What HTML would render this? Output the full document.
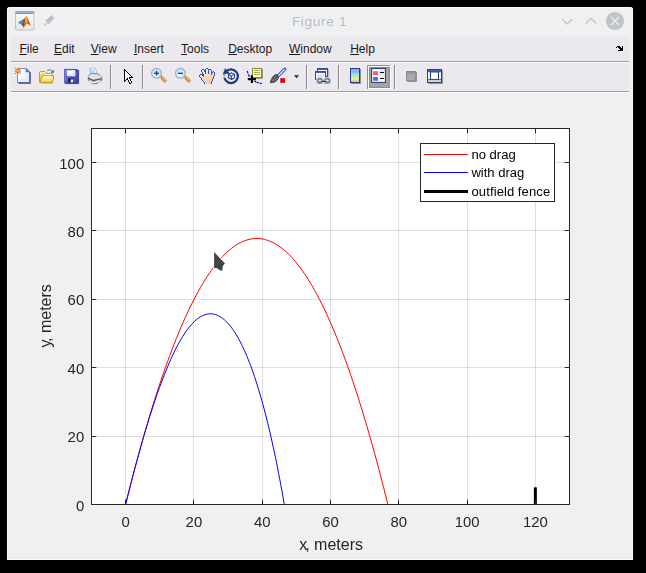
<!DOCTYPE html>
<html><head><meta charset="utf-8"><title>Figure 1</title>
<style>
html,body{margin:0;padding:0;background:#000;}
body{width:646px;height:573px;overflow:hidden;position:relative;font-family:"Liberation Sans",sans-serif;}
#win{position:absolute;left:7px;top:7px;width:626px;height:553px;background:#eff0f1;border-radius:3px 3px 1px 1px;box-shadow:inset 0 0 0 1px #fbfbfc;}
#menubar{position:absolute;left:11px;top:36px;width:618px;height:25px;background:#ebe9ee;}
#toolbar{position:absolute;left:11px;top:63px;width:618px;height:28px;background:#ebe9ee;}
.sepg{position:absolute;left:11px;width:618px;height:1px;background:#a0a0a3;}
.sepw{position:absolute;left:11px;width:618px;height:1px;background:#ffffff;}
#canvas{position:absolute;left:11px;top:93px;width:618px;height:463px;background:#f0f0f0;}
.mi{position:absolute;top:42px;font-size:12px;line-height:14px;color:#1a1a1a;white-space:pre;}
.mi u{text-decoration:underline;text-underline-offset:1px;}
#title{position:absolute;left:291.9px;top:13px;font-size:13.6px;letter-spacing:0.68px;line-height:18px;color:#bbbfc3;white-space:pre;}
svg{position:absolute;left:0;top:0;will-change:transform;}
text{font-family:"Liberation Sans",sans-serif;}
</style></head><body>
<div id="win"></div>
<div id="title">Figure 1</div>
<div id="menubar"></div>
<div class="sepg" style="top:61px"></div><div class="sepw" style="top:62px"></div>
<div id="toolbar"></div>
<div class="sepg" style="top:91px"></div><div class="sepw" style="top:92px"></div>
<div id="canvas"></div>
<div class="mi" style="left:19.4px"><u>F</u>ile</div>
<div class="mi" style="left:54.0px"><u>E</u>dit</div>
<div class="mi" style="left:90.8px"><u>V</u>iew</div>
<div class="mi" style="left:133.9px"><u>I</u>nsert</div>
<div class="mi" style="left:181.1px"><u>T</u>ools</div>
<div class="mi" style="left:228.2px"><u>D</u>esktop</div>
<div class="mi" style="left:289.0px"><u>W</u>indow</div>
<div class="mi" style="left:350.2px"><u>H</u>elp</div>
<svg width="646" height="573" viewBox="0 0 646 573">
<defs>
<linearGradient id="gpage" x1="0" y1="0" x2="1" y2="1"><stop offset="0" stop-color="#ffffff"/><stop offset="0.35" stop-color="#fcfdff"/><stop offset="1" stop-color="#d2e3fa"/></linearGradient>
<linearGradient id="gfold" x1="0" y1="0" x2="0" y2="1"><stop offset="0" stop-color="#fff8c4"/><stop offset="1" stop-color="#f6cc50"/></linearGradient>
<linearGradient id="gsave" x1="0" y1="0" x2="1" y2="1"><stop offset="0" stop-color="#7a7ae8"/><stop offset="1" stop-color="#3a3aa8"/></linearGradient>
<linearGradient id="gcb" x1="0" y1="0" x2="0" y2="1"><stop offset="0.05" stop-color="#a8a0f8"/><stop offset="0.27" stop-color="#88b8f0"/><stop offset="0.42" stop-color="#90e8f0"/><stop offset="0.57" stop-color="#c0e8b0"/><stop offset="0.74" stop-color="#f8f088"/><stop offset="0.87" stop-color="#f0c890"/><stop offset="1" stop-color="#ffb898"/></linearGradient>
<linearGradient id="ghand" gradientUnits="userSpaceOnUse" x1="201" y1="70" x2="212" y2="84"><stop offset="0" stop-color="#fdeedc"/><stop offset="1" stop-color="#f2c69c"/></linearGradient>
<radialGradient id="glens" cx="0.4" cy="0.75" r="0.8"><stop offset="0" stop-color="#ffffff"/><stop offset="0.55" stop-color="#c4e8f0"/><stop offset="1" stop-color="#dce6f8"/></radialGradient>
<linearGradient id="gmlb" x1="0" y1="0" x2="0" y2="1"><stop offset="0" stop-color="#ffffff"/><stop offset="1" stop-color="#e4e4e6"/></linearGradient>
<linearGradient id="gmlo" x1="0" y1="0" x2="1" y2="0"><stop offset="0" stop-color="#a02810"/><stop offset="0.3" stop-color="#e86a18"/><stop offset="0.5" stop-color="#f49a20"/><stop offset="0.72" stop-color="#d04c1a"/><stop offset="1" stop-color="#8c2418"/></linearGradient>
<linearGradient id="gmlp" x1="0" y1="0" x2="1" y2="0"><stop offset="0" stop-color="#3c4488"/><stop offset="1" stop-color="#8a2216"/></linearGradient>
<linearGradient id="gprn" x1="0" y1="0" x2="0" y2="1"><stop offset="0" stop-color="#e8e8e8"/><stop offset="1" stop-color="#9a9a9a"/></linearGradient>
<linearGradient id="gmlt" x1="0" y1="0" x2="0" y2="1"><stop offset="0" stop-color="#78a4ce"/><stop offset="0.45" stop-color="#94bcde"/><stop offset="1" stop-color="#588cc4"/></linearGradient>
<linearGradient id="gmlw" x1="0" y1="0" x2="1" y2="0"><stop offset="0" stop-color="#5aa8e2"/><stop offset="0.6" stop-color="#4484c8"/><stop offset="1" stop-color="#3e5aa4"/></linearGradient>
</defs>
<g id="mlicon">
<rect x="15.5" y="11.5" width="18.5" height="18.6" rx="1.2" fill="url(#gmlb)" stroke="#c4c5c8" stroke-width="1"/>
<path d="M16 30.4 L33.5 30.4" stroke="#d4d5d8" stroke-width="0.8"/>
<rect x="15.3" y="11" width="18.9" height="3" rx="0.8" fill="url(#gmlt)"/>
<path d="M17.7 22.5 Q21 20.7 24.7 18.5 L23.9 21.4 L22.7 23.8 L21.6 24.7 Q19.6 23.9 17.7 22.5 Z" fill="url(#gmlw)"/>
<path d="M24.7 18.5 L25.7 16.8 L25.2 21 L24 24.6 L22.6 25.8 L21.6 24.7 L22.7 23.8 L23.9 21.4 Z" fill="url(#gmlp)"/>
<path d="M26.3 15.7 C27.3 15.5 28.3 20.5 30.8 25.5 C29.3 24.7 28 23.3 26.7 24.2 C25.5 25.1 24.7 27 23.6 27.7 C23.2 27 22.9 26.4 22.6 25.8 C24 24 25 19 26.3 15.7 Z" fill="url(#gmlo)"/>
<path d="M26.4 16.8 L25.9 22.4" stroke="#f8c638" stroke-width="1.1" opacity="0.85"/>
<path d="M23.6 27.7 C24.2 26 25 25 26 24.5 L24.9 26.7 Z" fill="#f8c020"/>
</g>
<g id="pin" stroke="#bcc0c4" fill="none" stroke-linecap="butt">
<path d="M47.6 21.9 L52.9 16.6" stroke-width="4.2"/>
<path d="M45.5 19.6 L50.2 24.3" stroke-width="1.2"/>
<path d="M47.8 22.0 L44.2 25.7" stroke-width="1.1"/>
</g>
<g fill="none" stroke="#b9bdc1" stroke-width="1.1">
<path d="M561.8 18.8 L567.1 24.0 L572.4 18.8"/>
<path d="M585.8 23.6 L591.1 18.3 L596.4 23.6"/>
</g>
<circle cx="615" cy="21" r="9.1" fill="#bfc4c8"/>
<path d="M611 17 L619 25 M619 17 L611 25" stroke="#f0f1f2" stroke-width="1.1" fill="none"/>
<g id="dock">
<path d="M617 46h3v1h-3zM622 46h1v1h-1zM616 47h1v1h-1zM618 47h3v1h-3zM622 47h1v1h-1zM619 48h4v1h-4zM620 49h3v1h-3zM618 50h5v1h-5z" fill="#000000"/>
</g>
<line x1="110.5" y1="65" x2="110.5" y2="89" stroke="#86868a" stroke-width="1"/>
<line x1="111.5" y1="65" x2="111.5" y2="89" stroke="#f8f8fa" stroke-width="1"/>
<line x1="142.5" y1="65" x2="142.5" y2="89" stroke="#86868a" stroke-width="1"/>
<line x1="143.5" y1="65" x2="143.5" y2="89" stroke="#f8f8fa" stroke-width="1"/>
<line x1="306.5" y1="65" x2="306.5" y2="89" stroke="#86868a" stroke-width="1"/>
<line x1="307.5" y1="65" x2="307.5" y2="89" stroke="#f8f8fa" stroke-width="1"/>
<line x1="338.5" y1="65" x2="338.5" y2="89" stroke="#86868a" stroke-width="1"/>
<line x1="339.5" y1="65" x2="339.5" y2="89" stroke="#f8f8fa" stroke-width="1"/>
<line x1="394.5" y1="65" x2="394.5" y2="89" stroke="#86868a" stroke-width="1"/>
<line x1="395.5" y1="65" x2="395.5" y2="89" stroke="#f8f8fa" stroke-width="1"/>
<g id="new">
<path d="M18.5 83.5 L30.5 83.5 L30.5 72.2" stroke="#5e6c86" stroke-width="1" fill="none"/>
<path d="M17.5 68.5 L26 68.5 L29.5 72 L29.5 82.5 L17.5 82.5 Z" fill="url(#gpage)" stroke="#6c92dc" stroke-width="1"/>
<path d="M29.5 72 L29.5 82.5 L17.8 82.5" stroke="#6668a8" stroke-width="1" fill="none"/>
<path d="M26 68.3 L26 72 L29.7 72 Z" fill="#5e64a8" stroke="#5e64a8" stroke-width="0.5"/>
<circle cx="27.3" cy="70.6" r="0.6" fill="#6c9ce0"/>
<g fill="#e8703c"><circle cx="15.4" cy="68.5" r="0.65"/><circle cx="20.4" cy="68.5" r="0.65"/><circle cx="15.4" cy="73.4" r="0.65"/><circle cx="20.4" cy="73.4" r="0.65"/></g>
<path d="M17.9 67.6 L17.9 74.2 M14.6 70.9 L21.2 70.9" stroke="#f4b088" stroke-width="1.2" fill="none"/>
<circle cx="17.9" cy="70.9" r="2" fill="#f0a050" stroke="#e4682e" stroke-width="1"/>
<rect x="17.2" y="70.2" width="1.4" height="1.4" fill="#e4e45c"/>
</g>
<g id="open">
<path d="M47.3 70.8 Q49.7 68.2 52.3 71" stroke="#5a7aaa" stroke-width="1" fill="none"/>
<path d="M53.7 69.8 L53.9 72.9 L50.8 72.4 Z" fill="#3e5e9a"/>
<path d="M40.6 83.4 L53.4 83.4" stroke="#8a9ab0" stroke-width="0.8" opacity="0.55"/>
<path d="M39.5 73.2 Q39.5 71.5 41.2 71.5 L44.6 71.5 L46 73.4 L51.4 73.4 Q52.4 73.4 52.4 74.6 L52.4 82.3 L39.5 82.3 Z" fill="#f4d050" stroke="#c8981a" stroke-width="1"/>
<path d="M40.6 74.6 L40.6 72.8 L44.4 72.8 L45.6 74.6 L51 74.6" stroke="#fffbe4" stroke-width="1.1" fill="none"/>
<path d="M42.6 75.9 L53.6 75.9 L53.4 79 L52.2 82.4 L39.9 82.4 L41.4 78 Z" fill="url(#gfold)" stroke="#c8981a" stroke-width="1" stroke-linejoin="round"/>
<path d="M43.2 77 L51.6 77" stroke="#fffdf0" stroke-width="1" fill="none"/>
</g>
<g id="save">
<path d="M65.4 83.6 L78.6 83.6 L78.6 70.2" stroke="#2c3a78" stroke-width="1" fill="none" opacity="0.85"/>
<path d="M64.5 69.4 L77.1 69.4 L78 70.3 L78 83 L64.5 83 Z" fill="url(#gsave)" stroke="#3a3aa4" stroke-width="0.8"/>
<path d="M65.2 70 L65.2 82.4" stroke="#8c8cec" stroke-width="0.9"/>
<rect x="66.9" y="70.2" width="8.3" height="5.7" fill="#f6f8fc"/>
<path d="M66.9 75.9 L75.2 75.9 L75.2 72 Z" fill="#dfe4f0"/>
<path d="M66.9 76.5 L75.2 76.5" stroke="#8484dc" stroke-width="0.8"/>
<rect x="76.4" y="70" width="0.9" height="1.4" fill="#20205c"/>
<rect x="68.2" y="78.4" width="5.4" height="3.8" fill="#1a1a34"/>
<rect x="70.7" y="79.4" width="2.6" height="2.8" fill="#eeeef6"/>
</g>
<g id="print">
<path d="M89.5 68.2 L95.4 68.2 L97.3 73.8 L90.7 74 Z" fill="#b8d8f8" stroke="#90b0d8" stroke-width="0.6"/>
<path d="M91 69.3 L94.6 69.3 L95.8 72.8" stroke="#eef5fd" stroke-width="1.1" fill="none"/>
<path d="M88.3 75.8 L90.6 73.8 L97.4 73.8 L101.7 76.6 L101.7 80.2 L96.8 83.4 L93 83.4 L88.3 80 Z" fill="url(#gprn)" stroke="#6c6c6c" stroke-width="0.9" stroke-linejoin="round"/>
<path d="M88.6 75.8 L93 78.2 L101.5 76.6 L97.4 74.2 L90.8 74.2 Z" fill="#dcdcdc"/>
<path d="M88.4 76 L93 78.5 L101.6 76.8" stroke="#fafafa" stroke-width="0.9" fill="none"/>
<path d="M88.4 78.1 L93 80.6 L101.6 78.8" stroke="#5a5a5a" stroke-width="1.1" fill="none"/>
<path d="M89.8 80.8 L93.4 82.8 L100 80.8" stroke="#fcfcfc" stroke-width="1.3" fill="none"/>
<path d="M91 83 L93.2 84 L97.4 83.6" stroke="#8a8a8a" stroke-width="0.7" fill="none" opacity="0.7"/>
<circle cx="99.7" cy="78" r="0.6" fill="#48c048"/>
</g>
<g id="pointer">
<path d="M125 71h1v1h-1zM125 72h2v1h-2zM125 73h3v1h-3zM125 74h4v1h-4zM125 75h5v1h-5zM125 76h6v1h-6zM125 77h4v1h-4zM125 78h2v1h-2zM128 78h1v1h-1zM125 79h1v1h-1zM128 79h2v1h-2zM129 80h1v1h-1zM129 81h2v1h-2zM130 82h1v1h-1z" fill="#ffffff"/>
<path d="M124 69h1v1h-1zM124 70h2v1h-2zM124 71h1v1h-1zM126 71h1v1h-1zM124 72h1v1h-1zM127 72h1v1h-1zM124 73h1v1h-1zM128 73h1v1h-1zM124 74h1v1h-1zM129 74h1v1h-1zM124 75h1v1h-1zM130 75h1v1h-1zM124 76h1v1h-1zM131 76h1v1h-1zM124 77h1v1h-1zM129 77h4v1h-4zM124 78h1v1h-1zM127 78h1v1h-1zM129 78h1v1h-1zM124 79h1v1h-1zM126 79h2v1h-2zM130 79h1v1h-1zM124 80h2v1h-2zM128 80h1v1h-1zM130 80h1v1h-1zM124 81h1v1h-1zM128 81h1v1h-1zM131 81h1v1h-1zM129 82h1v1h-1zM131 82h1v1h-1zM129 83h2v1h-2z" fill="#000000"/>
</g>
<g><path d="M160.2 75.8 L161.6 77.2" stroke="#8a8c98" stroke-width="1.8"/><path d="M161.5 77.3 L165.5 81.3" stroke="#d08a20" stroke-width="3.4" stroke-linecap="butt"/><path d="M162.0 76.9 L166.0 80.9" stroke="#f6b450" stroke-width="1.5" stroke-linecap="butt"/><path d="M166.8 80.2 L164.5 82.6" stroke="#8a6a40" stroke-width="1" opacity="0.8"/><circle cx="156.5" cy="73.3" r="4.9" fill="url(#glens)" stroke="#98a8de" stroke-width="1.2"/><path d="M154.0 73.3 L159.0 73.3" stroke="#243c7c" stroke-width="1.3"/><path d="M156.5 70.8 L156.5 75.8" stroke="#243c7c" stroke-width="1.3"/></g>
<g><path d="M184.1 75.8 L185.5 77.2" stroke="#8a8c98" stroke-width="1.8"/><path d="M185.4 77.3 L189.4 81.3" stroke="#d08a20" stroke-width="3.4" stroke-linecap="butt"/><path d="M185.9 76.9 L189.9 80.9" stroke="#f6b450" stroke-width="1.5" stroke-linecap="butt"/><path d="M190.7 80.2 L188.4 82.6" stroke="#8a6a40" stroke-width="1" opacity="0.8"/><circle cx="180.4" cy="73.3" r="4.9" fill="url(#glens)" stroke="#98a8de" stroke-width="1.2"/><path d="M177.9 73.3 L182.9 73.3" stroke="#243c7c" stroke-width="1.3"/></g>
<g id="hand">
<path d="M206 69h2v1h-2zM202 70h2v1h-2zM206 70h2v1h-2zM209 70h2v1h-2zM202 71h2v1h-2zM206 71h2v1h-2zM209 71h2v1h-2zM203 72h2v1h-2zM206 72h2v1h-2zM209 72h2v1h-2zM213 72h1v1h-1zM203 73h2v1h-2zM206 73h2v1h-2zM209 73h2v1h-2zM212 73h2v1h-2zM204 74h7v1h-7zM212 74h2v1h-2zM200 75h2v1h-2zM204 75h10v1h-10zM200 76h3v1h-3zM204 76h9v1h-9zM201 77h12v1h-12zM202 78h11v1h-11zM202 79h10v1h-10zM203 80h9v1h-9zM204 81h7v1h-7zM205 82h6v1h-6zM205 83h6v1h-6z" fill="url(#ghand)"/>
<path d="M206 68h2v1h-2zM202 69h2v1h-2zM205 69h1v1h-1zM208 69h3v1h-3zM201 70h1v1h-1zM204 70h2v1h-2zM208 70h1v1h-1zM211 70h1v1h-1zM201 71h1v1h-1zM204 71h2v1h-2zM208 71h1v1h-1zM211 71h1v1h-1zM213 71h1v1h-1zM202 72h1v1h-1zM205 72h1v1h-1zM208 72h1v1h-1zM211 72h2v1h-2zM214 72h1v1h-1zM202 73h1v1h-1zM205 73h1v1h-1zM208 73h1v1h-1zM211 73h1v1h-1zM214 73h1v1h-1zM200 74h4v1h-4zM211 74h1v1h-1zM214 74h1v1h-1zM199 75h1v1h-1zM202 75h2v1h-2zM214 75h1v1h-1zM199 76h1v1h-1zM203 76h1v1h-1zM213 76h1v1h-1zM200 77h1v1h-1zM213 77h1v1h-1zM201 78h1v1h-1zM213 78h1v1h-1zM201 79h1v1h-1zM212 79h1v1h-1zM202 80h1v1h-1zM212 80h1v1h-1zM203 81h1v1h-1zM211 81h1v1h-1zM204 82h1v1h-1zM211 82h1v1h-1zM204 83h1v1h-1zM211 83h1v1h-1z" fill="#2a50bc"/>
</g>
<g id="rot">
<path d="M225.96 71.57 A6.85 6.85 0 1 1 224.40 77.81" stroke="#1f3c80" stroke-width="2.3" fill="none"/>
<path d="M224.40 77.81 A6.85 6.85 0 0 1 224.54 74.03" stroke="#a8b2cc" stroke-width="1.8" fill="none"/>
<path d="M225.2 68.5 L223.1 74.3 L228.8 73 Z" fill="#1f3c80" stroke="#1f3c80" stroke-width="0.5" stroke-linejoin="round"/>
<path d="M228.2 71.8 L229.2 74.4" stroke="#1f3c80" stroke-width="1"/>
<path d="M228.4 74.4 L231.4 73 L234.5 74.4 L234.5 78 L231.4 79.4 L228.4 78 Z" fill="#f4f7fd" stroke="#22408a" stroke-width="1" stroke-linejoin="round"/>
<path d="M228.4 74.4 L231.4 75.9 L231.4 79.4 L228.4 78 Z" fill="#b4c6f0"/>
<path d="M228.4 74.4 L231.4 75.9 L234.5 74.4 M231.4 75.9 L231.4 79.4" stroke="#22408a" stroke-width="1" fill="none"/>
<path d="M228.4 74.4 L231.4 73 L234.5 74.4 L234.5 78 L231.4 79.4 L228.4 78 Z" fill="none" stroke="#22408a" stroke-width="1" stroke-linejoin="round"/>
</g>
<g id="dcur">
<path d="M253 78.5 L262.5 78.5 L262.5 69" stroke="#8c8c48" stroke-width="1" fill="none" opacity="0.85"/>
<rect x="252.5" y="68.5" width="9" height="9" fill="#ffffc8" stroke="#8a8a30" stroke-width="1"/>
<path d="M254 70.5 L260 70.5 M254 72.5 L260 72.5 M254 74.5 L260 74.5" stroke="#a8a85c" stroke-width="1"/>
<path d="M247.2 71 L247.9 73.3 M248.2 74.3 L249.6 76.7" stroke="#1212f0" stroke-width="1.3" fill="none"/>
<path d="M254.2 81 L256.1 81.8 M256.6 82.2 L259 83 M259.8 83.3 L261.9 83.4" stroke="#1212f0" stroke-width="1.3" fill="none"/>
<path d="M247.8 79.1 L256 79.1 M251.9 75.3 L251.9 83.1" stroke="#000" stroke-width="2.1"/>
</g>
<g id="brush">
<path d="M277.8 76.2 L284.8 69.2" stroke="#3454c0" stroke-width="3.3" stroke-linecap="round"/>
<path d="M278.8 75.2 L284.6 69.4" stroke="#eef2fc" stroke-width="1.3" stroke-linecap="round"/>
<path d="M275.6 74.6 L278.6 77.6" stroke="#d8dce8" stroke-width="1.6"/>
<path d="M276.3 74.1 L279.2 77" stroke="#24347c" stroke-width="1"/>
<path d="M275.8 74.6 C272.8 75.6 271.2 79 270.2 82.8 C274 82.8 277.2 81.4 278.6 77.4 Z" fill="#4c4c4c" stroke="#303030" stroke-width="0.7"/>
<path d="M272.2 81 C273.2 78.8 274.6 77.2 276.4 76.4 M273.8 81.4 C275 79.8 276.2 78.6 277.4 78" stroke="#a4a4a4" stroke-width="0.8" fill="none"/>
<rect x="279.2" y="77.2" width="6.8" height="6.6" fill="#ffffff"/>
<rect x="280.2" y="78.1" width="5" height="4.8" fill="#f00010"/>
<path d="M293.8 75.2 L299.2 75.2 L296.5 78.2 Z" fill="#303030"/>
</g>
<g id="link">
<path d="M328.6 69.4 L328.6 76.6" stroke="#8a8e98" stroke-width="0.9" opacity="0.7"/>
<rect x="317.5" y="68.5" width="10" height="7.8" fill="#fbfcfe" stroke="#26449a" stroke-width="1"/>
<rect x="317" y="68" width="11" height="1.9" fill="#2e4e9e"/>
<rect x="315.5" y="71.5" width="10" height="8" fill="#fbfcfe" stroke="#26449a" stroke-width="1"/>
<rect x="315" y="71" width="11" height="1.9" fill="#2e4e9e"/>
<rect x="317" y="74.2" width="7" height="3" fill="#dde4f2"/>
<ellipse cx="319.9" cy="80.5" rx="3.2" ry="2.7" fill="#dfe3ea" stroke="#c4cee0" stroke-width="1.5"/>
<ellipse cx="327.3" cy="80.5" rx="3.2" ry="2.7" fill="#dfe3ea" stroke="#c4cee0" stroke-width="1.5"/>
<ellipse cx="319.9" cy="80.5" rx="2.3" ry="1.7" fill="none" stroke="#26365e" stroke-width="1"/>
<ellipse cx="327.3" cy="80.5" rx="2.3" ry="1.7" fill="none" stroke="#26365e" stroke-width="1"/>
<path d="M316.6 82.6 Q319.9 84.4 323 82.8 M324.2 82.8 Q327.3 84.4 330.6 82.6" stroke="#6c7890" stroke-width="0.8" fill="none"/>
<path d="M321.6 80.2 L325.8 80.2" stroke="#c0cce8" stroke-width="1.1"/>
<path d="M321.6 81.3 L325.8 81.3" stroke="#1c2c5c" stroke-width="1.2"/>
</g>
<g id="cbar">
<path d="M351 83.5 L360.5 83.5 L360.5 69" stroke="#646c74" stroke-width="1" fill="none" opacity="0.75"/>
<rect x="350.5" y="68.5" width="9" height="14" fill="url(#gcb)" stroke="#24408a" stroke-width="1"/>
</g>
<g id="legbtn">
<rect x="369" y="67" width="21" height="21" fill="#a4a4a5"/>
<rect x="369.5" y="67.5" width="20" height="20" fill="none" stroke="#8c8c8e" stroke-width="1"/>
<path d="M368.5 88.5 L368.5 66.5 L390.5 66.5 L390.5 88.5 Z" stroke="#fbfbfc" stroke-width="1" fill="none"/>
<path d="M367.5 89 L367.5 65.5 L390 65.5" stroke="#8e8e90" stroke-width="1" fill="none"/>
<rect x="371.6" y="68.5" width="13.8" height="13.9" fill="#fbfcfe" stroke="#2a4282" stroke-width="1.1"/>
<rect x="379" y="70" width="5.4" height="5.6" fill="#e4ebf6"/>
<rect x="373.1" y="71.2" width="4.9" height="3.8" fill="#e4646a"/>
<rect x="373.1" y="77" width="4.9" height="3.8" fill="#6264e2"/>
<path d="M380 72.5 L384 72.5 M380 78.5 L384 78.5" stroke="#000" stroke-width="1.1"/>
</g>
<g id="hpt">
<path d="M407 81.5 L416.5 81.5 L416.5 72" stroke="#949494" stroke-width="1" fill="none"/>
<rect x="406" y="71" width="10" height="10" fill="#8e8e8e"/>
<rect x="407" y="73.6" width="8" height="6.4" fill="#a9a9a9"/>
<rect x="407" y="72" width="8" height="1" fill="#949494"/>
</g>
<g id="spt">
<path d="M428.6 83.6 L442.6 83.6 L442.6 70.4" stroke="#6a7068" stroke-width="1" fill="none" opacity="0.7"/>
<rect x="427.5" y="69.5" width="14" height="13" fill="#fafaf8" stroke="#22408a" stroke-width="1"/>
<rect x="428" y="70" width="13" height="1.3" fill="#4464c4"/>
<path d="M428 71.7 L441 71.7" stroke="#22408a" stroke-width="0.9"/>
<rect x="428" y="80" width="13" height="2" fill="#dfd8bc"/>
<path d="M428 79.5 L441 79.5" stroke="#4060b0" stroke-width="0.9"/>
<path d="M429.5 72.6 L429.5 79 M439.9 72.6 L439.9 79" stroke="#d4d8dc" stroke-width="0.9" stroke-dasharray="1 1"/>
<path d="M428.2 80.2 L441 80.2" stroke="#b8b49c" stroke-width="0.6" stroke-dasharray="1 0.8"/>
<rect x="430.5" y="72" width="8" height="7.4" fill="#ffffff" stroke="#22408a" stroke-width="1"/>
</g>
<rect x="91.5" y="128.5" width="478.0" height="376.0" fill="#ffffff"/>
<path d="M125.5 128.5 L125.5 504.5M193.5 128.5 L193.5 504.5M262.5 128.5 L262.5 504.5M330.5 128.5 L330.5 504.5M398.5 128.5 L398.5 504.5M467.5 128.5 L467.5 504.5M535.5 128.5 L535.5 504.5" stroke="#262626" stroke-opacity="0.15" stroke-width="1" fill="none"/>
<path d="M91.5 436.5 L569.5 436.5M91.5 367.5 L569.5 367.5M91.5 299.5 L569.5 299.5M91.5 230.5 L569.5 230.5M91.5 162.5 L569.5 162.5" stroke="#262626" stroke-opacity="0.15" stroke-width="1" fill="none"/>
<path d="M125.64 504.40L127.84 495.54L130.05 486.82L132.25 478.26L134.45 469.85L136.66 461.59L138.86 453.47L141.06 445.51L143.27 437.70L145.47 430.04L147.68 422.53L149.88 415.17L152.08 407.95L154.29 400.89L156.49 393.98L158.69 387.22L160.90 380.61L163.10 374.15L165.30 367.84L167.51 361.68L169.71 355.68L171.91 349.82L174.12 344.11L176.32 338.55L178.52 333.14L180.73 327.88L182.93 322.78L185.13 317.82L187.34 313.01L189.54 308.35L191.75 303.85L193.95 299.49L196.15 295.28L198.36 291.23L200.56 287.32L202.76 283.57L204.97 279.96L207.17 276.51L209.37 273.20L211.58 270.05L213.78 267.04L215.98 264.19L218.19 261.48L220.39 258.93L222.59 256.53L224.80 254.27L227.00 252.17L229.21 250.22L231.41 248.41L233.61 246.76L235.82 245.26L238.02 243.91L240.22 242.70L242.43 241.65L244.63 240.75L246.83 240.00L249.04 239.40L251.24 238.95L253.44 238.65L255.65 238.50L257.85 238.50L260.05 238.65L262.26 238.95L264.46 239.40L266.66 240.00L268.87 240.75L271.07 241.65L273.28 242.70L275.48 243.91L277.68 245.26L279.89 246.76L282.09 248.41L284.29 250.22L286.50 252.17L288.70 254.27L290.90 256.53L293.11 258.93L295.31 261.48L297.51 264.19L299.72 267.04L301.92 270.05L304.12 273.20L306.33 276.51L308.53 279.96L310.74 283.57L312.94 287.32L315.14 291.23L317.35 295.28L319.55 299.49L321.75 303.85L323.96 308.35L326.16 313.01L328.36 317.82L330.57 322.78L332.77 327.88L334.97 333.14L337.18 338.55L339.38 344.11L341.58 349.82L343.79 355.68L345.99 361.68L348.19 367.84L350.40 374.15L352.60 380.61L354.81 387.22L357.01 393.98L359.21 400.89L361.42 407.95L363.62 415.17L365.82 422.53L368.03 430.04L370.23 437.70L372.43 445.51L374.64 453.47L376.84 461.59L379.04 469.85L381.25 478.26L383.45 486.82L385.65 495.54L387.86 504.40" stroke="#ff0000" stroke-width="1" fill="none" stroke-linejoin="round"/>
<path d="M125.64 504.40L127.60 496.51L129.54 488.84L131.45 481.38L133.34 474.13L135.20 467.08L137.05 460.23L138.88 453.57L140.69 447.11L142.47 440.83L144.24 434.74L146.00 428.83L147.73 423.09L149.46 417.52L151.16 412.13L152.85 406.90L154.53 401.84L156.19 396.93L157.84 392.19L159.48 387.61L161.10 383.18L162.71 378.90L164.31 374.77L165.91 370.79L167.49 366.95L169.05 363.27L170.62 359.72L172.17 356.32L173.71 353.05L175.24 349.93L176.77 346.94L178.28 344.08L179.79 341.36L181.30 338.78L182.79 336.33L184.28 334.01L185.77 331.81L187.24 329.75L188.71 327.82L190.18 326.01L191.64 324.33L193.10 322.78L194.55 321.35L195.99 320.05L197.43 318.87L198.87 317.82L200.31 316.89L201.74 316.08L203.16 315.40L204.59 314.84L206.01 314.39L207.42 314.08L208.84 313.88L210.25 313.80L211.65 313.85L213.06 314.01L214.46 314.29L215.86 314.70L217.25 315.22L218.64 315.87L220.03 316.63L221.41 317.51L222.79 318.51L224.17 319.63L225.54 320.86L226.91 322.21L228.28 323.68L229.64 325.27L230.99 326.96L232.35 328.78L233.69 330.71L235.03 332.75L236.37 334.90L237.70 337.17L239.02 339.54L240.34 342.03L241.66 344.62L242.97 347.33L244.27 350.14L245.56 353.06L246.85 356.08L248.13 359.21L249.41 362.44L250.67 365.78L251.93 369.21L253.19 372.75L254.43 376.39L255.67 380.12L256.90 383.95L258.12 387.88L259.34 391.90L260.55 396.02L261.74 400.23L262.94 404.53L264.12 408.92L265.29 413.40L266.46 417.96L267.61 422.62L268.76 427.36L269.90 432.18L271.03 437.08L272.15 442.07L273.26 447.14L274.36 452.28L275.46 457.50L276.54 462.80L277.62 468.18L278.68 473.63L279.74 479.15L280.79 484.74L281.83 490.41L282.86 496.14L283.88 501.94L284.30 504.40" stroke="#0000ff" stroke-width="1" fill="none" stroke-linejoin="round"/>
<path d="M535.36 504.40 L535.36 487.31" stroke="#000" stroke-width="3"/>
<path d="M125.5 504.5 L125.5 499.7M125.5 128.5 L125.5 133.3M193.5 504.5 L193.5 499.7M193.5 128.5 L193.5 133.3M262.5 504.5 L262.5 499.7M262.5 128.5 L262.5 133.3M330.5 504.5 L330.5 499.7M330.5 128.5 L330.5 133.3M398.5 504.5 L398.5 499.7M398.5 128.5 L398.5 133.3M467.5 504.5 L467.5 499.7M467.5 128.5 L467.5 133.3M535.5 504.5 L535.5 499.7M535.5 128.5 L535.5 133.3M91.5 504.5 L96.3 504.5M569.5 504.5 L564.7 504.5M91.5 436.5 L96.3 436.5M569.5 436.5 L564.7 436.5M91.5 367.5 L96.3 367.5M569.5 367.5 L564.7 367.5M91.5 299.5 L96.3 299.5M569.5 299.5 L564.7 299.5M91.5 230.5 L96.3 230.5M569.5 230.5 L564.7 230.5M91.5 162.5 L96.3 162.5M569.5 162.5 L564.7 162.5" stroke="#262626" stroke-width="1" fill="none"/>
<rect x="91.5" y="128.5" width="478.0" height="376.0" fill="none" stroke="#262626" stroke-width="1"/>
<text x="125.6" y="527" font-size="14.9" fill="#262626" text-anchor="middle">0</text>
<text x="193.9" y="527" font-size="14.9" fill="#262626" text-anchor="middle">20</text>
<text x="262.2" y="527" font-size="14.9" fill="#262626" text-anchor="middle">40</text>
<text x="330.5" y="527" font-size="14.9" fill="#262626" text-anchor="middle">60</text>
<text x="398.8" y="527" font-size="14.9" fill="#262626" text-anchor="middle">80</text>
<text x="467.1" y="527" font-size="14.9" fill="#262626" text-anchor="middle">100</text>
<text x="535.4" y="527" font-size="14.9" fill="#262626" text-anchor="middle">120</text>
<text x="84.2" y="510.8" font-size="14.9" fill="#262626" text-anchor="end">0</text>
<text x="84.2" y="441.9" font-size="14.9" fill="#262626" text-anchor="end">20</text>
<text x="84.2" y="373.6" font-size="14.9" fill="#262626" text-anchor="end">40</text>
<text x="84.2" y="305.2" font-size="14.9" fill="#262626" text-anchor="end">60</text>
<text x="84.2" y="236.9" font-size="14.9" fill="#262626" text-anchor="end">80</text>
<text x="84.2" y="168.5" font-size="14.9" fill="#262626" text-anchor="end">100</text>
<text x="331.1" y="549.7" font-size="16" fill="#262626" text-anchor="middle">x<tspan dx="-2">,</tspan> meters</text>
<text transform="translate(50.5 315.8) rotate(-90)" font-size="16" fill="#262626" text-anchor="middle">y<tspan dx="-1.4">,</tspan> meters</text>
<rect x="420.5" y="143.5" width="134" height="58" fill="#ffffff" stroke="#262626" stroke-width="1"/>
<path d="M424 154.5 L468 154.5" stroke="#ff0000" stroke-width="1"/>
<text x="471.4" y="158.6" font-size="13.05" fill="#000" >no drag</text>
<path d="M424 172.5 L468 172.5" stroke="#0000ff" stroke-width="1"/>
<text x="471.4" y="177.2" font-size="13.05" fill="#000" >with drag</text>
<path d="M424 191.6 L468 191.6" stroke="#000000" stroke-width="3"/>
<text x="471.4" y="195.6" font-size="13.05" fill="#000" letter-spacing="0.13" word-spacing="-0.5">outfield fence</text>
<g id="cursor">
<path d="M214.1 252 L225 263.4 L222.8 265.9 L222.4 270.2 L220.6 270.7 L216.8 267.9 L214.1 267.9 Z" fill="#444446" stroke="#ffffff" stroke-width="1.6" stroke-linejoin="round" paint-order="stroke"/>
</g>
</svg>
</body></html>
